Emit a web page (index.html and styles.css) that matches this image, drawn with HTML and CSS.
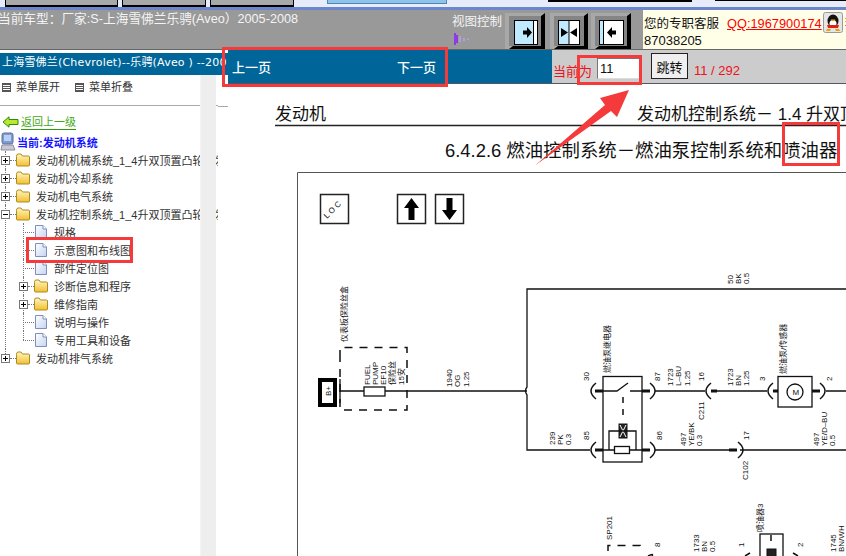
FILE: index.html
```html
<!DOCTYPE html>
<html lang="zh-CN">
<head>
<meta charset="UTF-8">
<meta name="viewport" content="width=device-width, initial-scale=1.0">
<title>发动机控制系统</title>
<link rel="stylesheet" href="styles.css">
</head>
<body>
<svg class="defs" width="0" height="0">
    <defs>
        <linearGradient id="folderFill" x1="0" y1="0" x2="0" y2="1">
            <stop offset="0" stop-color="#fff6c4"/>
            <stop offset="1" stop-color="#f2c030"/>
        </linearGradient>
        <linearGradient id="docFill" x1="0" y1="0" x2="1" y2="1">
            <stop offset="0" stop-color="#ffffff"/>
            <stop offset="1" stop-color="#c4d4f0"/>
        </linearGradient>
        <symbol id="folder" viewBox="0 0 14 13">
            <path d="M.5 3V11.5Q.5 12.500 1.500 12.500H12.500Q13.500 12.500 13.500 11.500V3.500Q13.500 2.500 12.500 2.500H6.500L5 .5H2Q.5 .5 .5 3Z" fill="url(#folderFill)" stroke="#b08a20"/>
        </symbol>
        <symbol id="doc" viewBox="0 0 12 14">
            <path d="M.5 .5H8L11.500 4V13.500H.5Z" fill="url(#docFill)" stroke="#7d8fc0"/>
            <path d="M8 .5V4H11.500" fill="#fff" stroke="#7d8fc0"/>
        </symbol>
    </defs>
</svg>

<div class="page">
    <div class="top-strip">
        <span class="tab tab-a"></span>
        <span class="tab tab-b"></span>
        <span class="tab tab-c"></span>
        <span class="strip-light">
            <span class="strip-button"></span>
        </span>
        <span class="strip-black strip-black-a"></span>
        <span class="strip-light strip-gap"></span>
        <span class="strip-black strip-black-b"></span>
    </div>

    <header class="header">
        <div class="car-model">当前车型：厂家:S-上海雪佛兰乐骋(Aveo）2005-2008</div>
        <div class="view-control">
            <div>视图控制</div>
            <svg class="view-mark" width="18" height="12" viewBox="0 0 18 12">
                <path d="M1 0V12M3 2V10" stroke="#8a1cff" stroke-width="1.500"/>
                <path d="M6 3V9M10 5V8M14 5.500V7" stroke="#b9a2e8" stroke-width="1.500"/>
            </svg>
        </div>
        <div class="view-buttons">
            <svg class="view-btn" width="40" height="36" viewBox="0 0 40 36">
                <rect width="40" height="36" fill="#a8a8a8"/>
                <path d="M40 0V36H4L8 33H36V3Z" fill="#000"/>
                <rect x="4" y="3" width="32" height="30" fill="#858585"/>
                <rect x="9.500" y="7.500" width="23" height="24" fill="#bfeaff" stroke="#000"/>
                <rect x="28.500" y="7.500" width="4" height="24" fill="#fff" stroke="#000"/>
                <path d="M18 17.500H22V14L27 19.500L22 25V21.500H18Z" fill="#000"/>
            </svg>
            <svg class="view-btn" width="38" height="36" viewBox="0 0 38 36">
                <rect width="38" height="36" fill="#a8a8a8"/>
                <path d="M38 0V36H4L8 33H34V3Z" fill="#000"/>
                <rect x="4" y="3" width="30" height="30" fill="#858585"/>
                <rect x="8.500" y="7.500" width="21" height="24" fill="#fff" stroke="#000"/>
                <rect x="8.500" y="7.500" width="10.500" height="24" fill="#bfeaff" stroke="#000"/>
                <path d="M11 15L18 19.500L11 24ZM27 15L20 19.500L27 24Z" fill="#000"/>
            </svg>
            <svg class="view-btn" width="40" height="36" viewBox="0 0 40 36">
                <rect width="40" height="36" fill="#a8a8a8"/>
                <path d="M40 0V36H4L8 33H36V3Z" fill="#000"/>
                <rect x="4" y="3" width="32" height="30" fill="#858585"/>
                <rect x="8.500" y="7.500" width="24" height="24" fill="#fff" stroke="#000"/>
                <rect x="8.500" y="7.500" width="4" height="24" fill="#bfeaff" stroke="#000"/>
                <path d="M25 17.500H21V14L16 19.500L21 25V21.500H25Z" fill="#000"/>
            </svg>
        </div>
        <div class="service">
            <div class="service-line">
                <span>您的专职客服</span>
                <a class="qq-link" href="#">QQ:1967900174</a>
                <svg class="penguin" width="20" height="21" viewBox="0 0 20 21">
                    <rect x=".5" y=".5" width="19" height="20" rx="2" fill="#e6e6e6" stroke="#999"/>
                    <ellipse cx="10" cy="9" rx="5.500" ry="6.500" fill="#111"/>
                    <ellipse cx="10" cy="11.500" rx="3.500" ry="3.500" fill="#fff"/>
                    <path d="M7.500 7.500H12.500L10 9.500Z" fill="#f0a000"/>
                    <path d="M4 13H16L15 16H5Z" fill="#e02010"/>
                    <path d="M4 17H8L7 19H3ZM12 17H16L17 19H13Z" fill="#f0a000"/>
                </svg>
                <span class="qq-cut">李</span>
            </div>
            <div class="service-tel">87038205</div>
        </div>
    </header>

    <div class="work">
        <aside class="sidebar">
            <div class="sidebar-title">上海雪佛兰(Chevrolet)--乐骋(Aveo ) --200</div>
            <div class="menu-row">
                <span class="menu-item"><i class="menu-icon"></i>菜单展开</span>
                <span class="menu-item"><i class="menu-icon"></i>菜单折叠</span>
            </div>
            <a class="back-link" href="#">
                <svg width="17" height="12" viewBox="0 0 17 12">
                    <path d="M1 6L7 .8V3.500H16V8.500H7V11.200Z" fill="#b8e830" stroke="#2d8a10"/>
                </svg>
                <span>返回上一级</span>
            </a>
            <div class="current">
                <svg width="16" height="20" viewBox="0 0 16 20">
                    <rect x="2" y="1" width="11" height="11" rx="2" fill="#7f9bd0" stroke="#5a6f9a"/>
                    <rect x="4" y="3" width="7" height="6" fill="#b8d0f4"/>
                    <path d="M2 13H13L15 18H1Z" fill="#c9c9d6" stroke="#8d8da0"/>
                </svg>
                <span>当前:发动机系统</span>
            </div>
            <ul class="tree root">
                <li><div class="row"><i class="toggle plus"></i><i class="twig"></i><svg class="icon"><use href="#folder"/></svg><span>发动机机械系统_1_4升双顶置凸轮轴发动机</span></div></li>
                <li><div class="row"><i class="toggle plus"></i><i class="twig"></i><svg class="icon"><use href="#folder"/></svg><span>发动机冷却系统</span></div></li>
                <li><div class="row"><i class="toggle plus"></i><i class="twig"></i><svg class="icon"><use href="#folder"/></svg><span>发动机电气系统</span></div></li>
                <li>
                    <div class="row"><i class="toggle minus"></i><i class="twig"></i><svg class="icon"><use href="#folder"/></svg><span>发动机控制系统_1_4升双顶置凸轮轴发动机</span></div>
                    <ul class="tree sub">
                        <li><div class="row leaf"><i class="twig"></i><svg class="icon"><use href="#doc"/></svg><span>规格</span></div></li>
                        <li><div class="row leaf"><i class="twig"></i><svg class="icon"><use href="#doc"/></svg><span>示意图和布线图</span></div></li>
                        <li><div class="row leaf"><i class="twig"></i><svg class="icon"><use href="#doc"/></svg><span>部件定位图</span></div></li>
                        <li><div class="row"><i class="toggle plus"></i><i class="twig"></i><svg class="icon"><use href="#folder"/></svg><span>诊断信息和程序</span></div></li>
                        <li><div class="row"><i class="toggle plus"></i><i class="twig"></i><svg class="icon"><use href="#folder"/></svg><span>维修指南</span></div></li>
                        <li><div class="row leaf"><i class="twig"></i><svg class="icon"><use href="#doc"/></svg><span>说明与操作</span></div></li>
                        <li><div class="row leaf"><i class="twig"></i><svg class="icon"><use href="#doc"/></svg><span>专用工具和设备</span></div></li>
                    </ul>
                </li>
                <li><div class="row"><i class="toggle plus"></i><i class="twig"></i><svg class="icon"><use href="#folder"/></svg><span>发动机排气系统</span></div></li>
            </ul>
            <div class="side-scroll"></div>
        </aside>

        <main class="content">
            <div class="toolbar">
                <nav class="pager">
                    <a href="#">上一页</a>
                    <a href="#">下一页</a>
                </nav>
                <div class="jump">
                    <span class="jump-label">当前为</span>
                    <input class="jump-input" type="text" value="11">
                    <button class="jump-btn" type="button">跳转</button>
                    <span class="jump-count">11 / 292</span>
                </div>
            </div>

            <svg class="diagram" width="628" height="472" viewBox="218 84 628 472">
                <path class="fine" d="M218 106.500H228"/>

                <text class="page-head" x="275" y="120">发动机</text>
                <text class="page-head" x="637" y="120">发动机控制系统－ 1.4 升双顶置凸轮轴发动机</text>
                <path class="rule" d="M275 125.500H846"/>
                <text class="page-title" x="445" y="157">6.4.2.6 燃油控制系统－燃油泵控制系统和喷油器</text>

                <path class="frame" d="M846 172.500H297.500V556"/>

                <!-- legend boxes -->
                <rect class="box" x="320.500" y="194.500" width="28" height="29"/>
                <text class="tiny" transform="translate(327 219) rotate(-45)">L O C</text>
                <rect class="box" x="397.500" y="194.500" width="28" height="29"/>
                <path d="M411.500 198L419 208H414.500V220H408.500V208H404Z"/>
                <rect class="box" x="435.500" y="194.500" width="28" height="29"/>
                <path d="M449.500 220L442 210H446.500V198H452.500V210H457Z"/>

                <!-- B+ and fuse block -->
                <rect class="heavy" x="320" y="380" width="15" height="25"/>
                <text class="wire" transform="translate(331 396) rotate(-90)">B+</text>
                <path class="dash" d="M340 358V347.500H407V410H340V358"/>
                <path class="wire-line" d="M340 379V403M340 391H527"/>
                <rect class="fuse" x="364" y="387" width="21" height="9"/>
                <g class="wire">
                    <text transform="translate(347 342) rotate(-90)">仪表板保险丝盒</text>
                    <text transform="translate(370 385) rotate(-90)">FUEL</text>
                    <text transform="translate(378 385) rotate(-90)">PUMP</text>
                    <text transform="translate(386 385) rotate(-90)">EF10</text>
                    <text transform="translate(395 385) rotate(-90)">保险丝</text>
                    <text transform="translate(404 385) rotate(-90)">15安</text>
                    <text transform="translate(452 387) rotate(-90)">1940</text>
                    <text transform="translate(460 387) rotate(-90)">OG</text>
                    <text transform="translate(469 387) rotate(-90)">1.25</text>
                    <text transform="translate(733 284) rotate(-90)">50</text>
                    <text transform="translate(741 284) rotate(-90)">BK</text>
                    <text transform="translate(749 284) rotate(-90)">0.5</text>
                </g>

                <!-- main wires -->
                <path class="wire-line" d="M846 289H527V387Q524 391 527 395V450H590"/>
                <path class="wire-line" d="M655 391H705M717 391H767M826 391H846M655 450H730M740 450H846"/>

                <!-- connectors -->
                <path class="arc" d="M596 383Q586 391 596 399M650 383Q660 391 650 399M711 383Q701 391 711 399M773 383Q763 391 773 399M820 383Q830 391 820 399M596 442Q586 450 596 458M650 442Q660 450 650 458M738 442Q748 450 738 458"/>
                <path class="stub" d="M595 391H603M642 391H650M711 391H717M773 391H778M812 391H820M595 450H603M642 450H650M729 450H737"/>

                <!-- relay -->
                <rect class="box-thin" x="603" y="376.500" width="39" height="85.500"/>
                <path class="wire-line" d="M603 391H617L628 383M630 391H642"/>
                <path class="dash-thin" d="M623 397V420"/>
                <rect class="box-fill" x="619" y="424" width="8" height="14"/>
                <path class="thin-white" d="M620 425L626 437M626 425L620 437"/>
                <path class="wire-line" d="M623 431H609V450M623 431H636V450M603 450H614M630 450H642"/>
                <rect class="fuse" x="614.500" y="446.500" width="15" height="7"/>

                <!-- pump -->
                <rect class="box-thin" x="778" y="376.500" width="34" height="30.500"/>
                <circle class="box-thin" cx="795" cy="392" r="8"/>
                <text class="wire" x="792.500" y="395">M</text>

                <g class="wire">
                    <text transform="translate(610 373) rotate(-90)">燃油泵继电器</text>
                    <text transform="translate(786 374) rotate(-90)">燃油泵/传感器</text>
                    <text transform="translate(589 381) rotate(-90)">30</text>
                    <text transform="translate(660 381) rotate(-90)">87</text>
                    <text transform="translate(673 386) rotate(-90)">1723</text>
                    <text transform="translate(681 386) rotate(-90)">L–BU</text>
                    <text transform="translate(690 386) rotate(-90)">1.25</text>
                    <text transform="translate(704 381) rotate(-90)">16</text>
                    <text transform="translate(733 386) rotate(-90)">1723</text>
                    <text transform="translate(741 386) rotate(-90)">BN</text>
                    <text transform="translate(749 386) rotate(-90)">1.25</text>
                    <text transform="translate(765 381) rotate(-90)">3</text>
                    <text transform="translate(832 381) rotate(-90)">2</text>
                    <text transform="translate(704 420) rotate(-90)">C211</text>
                    <text transform="translate(555 445) rotate(-90)">239</text>
                    <text transform="translate(563 445) rotate(-90)">PK</text>
                    <text transform="translate(571 445) rotate(-90)">0.3</text>
                    <text transform="translate(589 440) rotate(-90)">85</text>
                    <text transform="translate(662 440) rotate(-90)">86</text>
                    <text transform="translate(686 446) rotate(-90)">497</text>
                    <text transform="translate(694 446) rotate(-90)">YE/BK</text>
                    <text transform="translate(702 446) rotate(-90)">0.3</text>
                    <text transform="translate(749 440) rotate(-90)">17</text>
                    <text transform="translate(748 480) rotate(-90)">C102</text>
                    <text transform="translate(819 446) rotate(-90)">497</text>
                    <text transform="translate(827 446) rotate(-90)">YE/D–BU</text>
                    <text transform="translate(835 446) rotate(-90)">0.5</text>
                    <text transform="translate(612 540) rotate(-90)">SP201</text>
                    <text transform="translate(660 547) rotate(-90)">8</text>
                    <text transform="translate(699 552) rotate(-90)">1733</text>
                    <text transform="translate(707 552) rotate(-90)">BN</text>
                    <text transform="translate(715 552) rotate(-90)">0.5</text>
                    <text transform="translate(763 532) rotate(-90)">喷油器3</text>
                    <text transform="translate(744 547) rotate(-90)">1</text>
                    <text transform="translate(803 547) rotate(-90)">2</text>
                    <text transform="translate(836 552) rotate(-90)">1745</text>
                    <text transform="translate(844 552) rotate(-90)">BN/WH</text>
                </g>

                <!-- lower injector part, cut by the window -->
                <path class="dash" d="M608 551V545.500H640V551"/>
                <path class="arc" d="M648 556Q654 553 652 556M745 556L750 553M793 553L798 556"/>
                <rect class="box-thin" x="760" y="534" width="23" height="26"/>
                <path class="dash-thin" d="M771 535V542"/>
                <rect class="box-fill" x="767" y="549" width="9" height="8"/>
            </svg>
        </main>
    </div>

    <!-- red annotations drawn on top of the screenshot -->
    <div class="mark mark-pager"></div>
    <div class="mark mark-input"></div>
    <div class="mark mark-tree"></div>
    <div class="mark mark-title"></div>
    <svg class="mark-arrow" width="100" height="82" viewBox="0 0 100 82">
        <path d="M0 79.500L70 19L65 12L94 4L82 31L76 25Z" fill="#f43a3a"/>
    </svg>
</div>
</body>
</html>
```

FILE: styles.css
```css
body {
    margin: 0;
    padding: 0;
    overflow: hidden;
    background-color: #fff;
    font-family: "Liberation Sans", "Noto Sans CJK SC", sans-serif;
    font-size: 12px;
}
.defs {
    display: block;
    height: 0;
}
.page {
    position: relative;
    display: flex;
    flex-direction: column;
    width: 846px;
    height: 556px;
    overflow: hidden;
}

/* strip of the window behind, at the very top */
.top-strip {
    display: flex;
    flex: none;
    height: 7px;
    border-bottom: 3px solid #6c86cc;
    background-color: #e6ecfa;
}
.tab {
    height: 5px;
    background-color: #a9a9a9;
    border-bottom: 2px solid #000;
    border-left: 1px solid #000;
    border-right: 1px solid #000;
}
.tab-a { width: 111px; margin-left: 5px; margin-right: 4px; }
.tab-b { width: 82px; margin-right: 4px; }
.tab-c { width: 82px; }
.strip-light {
    flex: none;
    width: 254px;
    padding-left: 33px;
    box-sizing: border-box;
}
.strip-button {
    display: block;
    width: 118px;
    height: 3px;
    background-color: #8fc3e8;
    border: 1px solid #4f86b8;
    border-top: 0;
}
.strip-black { height: 2px; background-color: #000; }
.strip-black-a { width: 144px; }
.strip-gap { width: 23px; padding: 0; }
.strip-black-b { flex: 1; height: 1px; }

/* grey header */
.header {
    display: flex;
    flex: none;
    height: 40px;
    box-sizing: border-box;
    border-bottom: 1px solid #666;
    background-color: #999;
    color: #f4f4f4;
}
.car-model {
    width: 452px;
    margin-left: -2px;
    padding-top: 2px;
    font-size: 12.700px;
    line-height: 15px;
}
.view-control {
    width: 53px;
    margin-left: 2px;
    padding-top: 4px;
    font-size: 12.500px;
    line-height: 16px;
}
.view-mark {
    display: block;
    margin-top: 3px;
    margin-left: 2px;
}
.view-buttons {
    display: flex;
    width: 138px;
    padding-top: 3px;
    box-sizing: border-box;
}
.view-btn { flex: none; margin-right: 5px; }
.view-btn + .view-btn { margin-right: 3px; }
.service {
    flex: 1;
    background-color: #ffffe8;
    color: #111;
    font-size: 12.500px;
    line-height: 15px;
    padding-left: 1px;
    overflow: hidden;
}
.service-line {
    display: flex;
    align-items: flex-start;
    white-space: nowrap;
    height: 26px;
    padding-top: 3px;
    box-sizing: border-box;
    line-height: 22px;
}
.qq-link {
    margin-left: 8px;
    color: #f00;
    font-size: 12.800px;
}
.penguin { flex: none; margin-left: 1px; margin-top: -1px; }
.qq-cut { margin-left: 2px; color: #f00; }
.service-tel { margin-top: -2px; font-size: 13px; line-height: 14px; }

/* sidebar and content */
.work {
    display: flex;
    flex: 1;
    min-height: 0;
}
.sidebar {
    position: relative;
    flex: none;
    width: 218px;
    white-space: nowrap;
    color: #333;
    font-size: 11px;
    background-color: #fff;
}
.side-scroll {
    position: absolute;
    top: 25px;
    left: 200px;
    bottom: 0;
    width: 16px;
    background-color: #eee;
    border-left: 1px solid #f4f4f4;
    box-sizing: border-box;
}
.sidebar-title {
    position: relative;
    width: 228px;
    height: 22px;
    margin-top: 3px;
    padding-left: 2px;
    box-sizing: border-box;
    overflow: hidden;
    background-color: #006699;
    color: #fff;
    font-family: "DejaVu Sans", "Noto Sans CJK SC", sans-serif;
    font-size: 11px;
    letter-spacing: .2px;
    line-height: 20px;
}
.sidebar-title + .menu-row { margin-top: 1px; }
.menu-row {
    display: flex;
    height: 30px;
    box-sizing: border-box;
    border-bottom: 1px solid #aaa;
    padding: 3px 0 0 2px;
    line-height: 16px;
}
.menu-item {
    display: flex;
    align-items: center;
    height: 16px;
    margin-right: 15px;
}
.menu-icon {
    width: 7px;
    height: 7px;
    margin-right: 5px;
    border: 1px solid #555;
    background: repeating-linear-gradient(#555 0 1px, #fff 1px 2px);
}
.back-link {
    display: flex;
    align-items: center;
    height: 18px;
    margin-top: 7px;
    padding-left: 2px;
    color: #45a818;
    text-decoration: none;
}
.back-link span {
    margin-left: 2px;
    border-bottom: 1px solid #2d9a10;
    line-height: 14px;
}
.current {
    display: flex;
    align-items: center;
    height: 19px;
    margin-top: 1px;
    font-weight: bold;
    color: #1414ff;
}
.current span { margin-left: 1px; }
.tree {
    list-style: none;
    margin: 0;
    padding: 0;
}
.tree.root { width: 218px; overflow: hidden; }
.tree.sub { padding-left: 18px; }
.tree li { position: relative; }
.tree li::before {
    content: "";
    position: absolute;
    top: 0;
    bottom: 0;
    left: 5px;
    border-left: 1px dotted #777;
}
.tree li:last-child::before { bottom: auto; height: 9px; }
.row {
    position: relative;
    display: flex;
    align-items: center;
    height: 18px;
}
.toggle {
    position: relative;
    flex: none;
    width: 7px;
    height: 7px;
    margin-left: 1px;
    border: 1px solid #777;
    background-color: #fff;
}
.toggle::before {
    content: "";
    position: absolute;
    left: 1px;
    top: 3px;
    width: 5px;
    height: 1px;
    background-color: #000;
}
.plus::after {
    content: "";
    position: absolute;
    left: 3px;
    top: 1px;
    width: 1px;
    height: 5px;
    background-color: #000;
}
.twig {
    flex: none;
    width: 6px;
    height: 0;
    border-top: 1px dotted #777;
}
.leaf .twig { width: 11px; margin-left: 5px; }
.icon {
    flex: none;
    width: 14px;
    height: 14px;
    margin-right: 6px;
}
.leaf .icon { width: 12px; margin-left: 1px; margin-right: 7px; }

.content {
    display: flex;
    flex: 1;
    flex-direction: column;
    min-width: 0;
}
.toolbar {
    display: flex;
    flex: none;
    height: 34px;
    margin-left: 10px;
    box-sizing: border-box;
    border-bottom: 1px solid #556;
}
.pager {
    display: flex;
    justify-content: space-between;
    width: 324px;
    box-sizing: border-box;
    padding: 8px 116px 0 4px;
    background-color: #006699;
}
.pager a {
    color: #fff;
    font-size: 13px;
    font-weight: 500;
    line-height: 20px;
    text-decoration: none;
}
.jump {
    display: flex;
    flex: 1;
    align-items: flex-start;
    background-color: #ccc;
    color: #f01020;
    font-size: 13px;
}
.jump-label { margin: 13px 0 0 1px; line-height: 18px; }
.jump-input {
    width: 44px;
    height: 21px;
    margin: 8px 0 0 5px;
    padding: 0 2px;
    box-sizing: border-box;
    border: 1px solid #ddd;
    border-top-color: #777;
    border-left-color: #777;
    background-color: #fff;
    color: #111;
    font-family: inherit;
    font-size: 13px;
}
.jump-btn {
    width: 37px;
    height: 26px;
    margin: 3px 0 0 10px;
    padding: 0;
    border: 1px solid #222;
    background-color: #efefef;
    color: #111;
    font-family: inherit;
    font-size: 13px;
}
.jump-count { margin: 12px 0 0 6px; line-height: 18px; font-size: 13px; }

/* wiring diagram page */
.diagram { display: block; flex: none; }
.diagram text { fill: #111; }
.page-head { font-size: 17px; }
.page-title { font-size: 18.400px; }
.tiny { font-size: 8px; }
.wire { font-size: 8px; }
.fine { stroke: #aaa; fill: none; }
.rule { stroke: #222; stroke-width: 1.500; fill: none; }
.frame { stroke: #555; stroke-width: 1; fill: none; }
.box { fill: #fff; stroke: #222; stroke-width: 1.500; }
.box-thin { fill: #fff; stroke: #111; stroke-width: 1.300; }
.box-fill { fill: #222; stroke: #111; }
.thin-white { stroke: #fff; stroke-width: 1; fill: none; }
.heavy { fill: #fff; stroke: #000; stroke-width: 4; }
.dash { stroke: #111; stroke-width: 1.500; fill: none; stroke-dasharray: 8 7; }
.dash-thin { stroke: #111; stroke-width: 1.500; fill: none; stroke-dasharray: 6 6; }
.wire-line { stroke: #111; stroke-width: 1.300; fill: none; }
.fuse { fill: #fff; stroke: #111; stroke-width: 1.300; }
.arc { stroke: #111; stroke-width: 1.500; fill: none; }
.stub { stroke: #111; stroke-width: 3; fill: none; }

/* red annotations */
.mark {
    position: absolute;
    box-sizing: border-box;
    border: 3px solid #f43a3a;
}
.mark-pager { left: 222px; top: 47px; width: 226px; height: 40px; }
.mark-input { left: 577px; top: 55px; width: 65px; height: 30px; }
.mark-tree { left: 26px; top: 237px; width: 107px; height: 26px; }
.mark-title { left: 782px; top: 122px; width: 58px; height: 44px; }
.mark-arrow { position: absolute; left: 535px; top: 86px; }
```
